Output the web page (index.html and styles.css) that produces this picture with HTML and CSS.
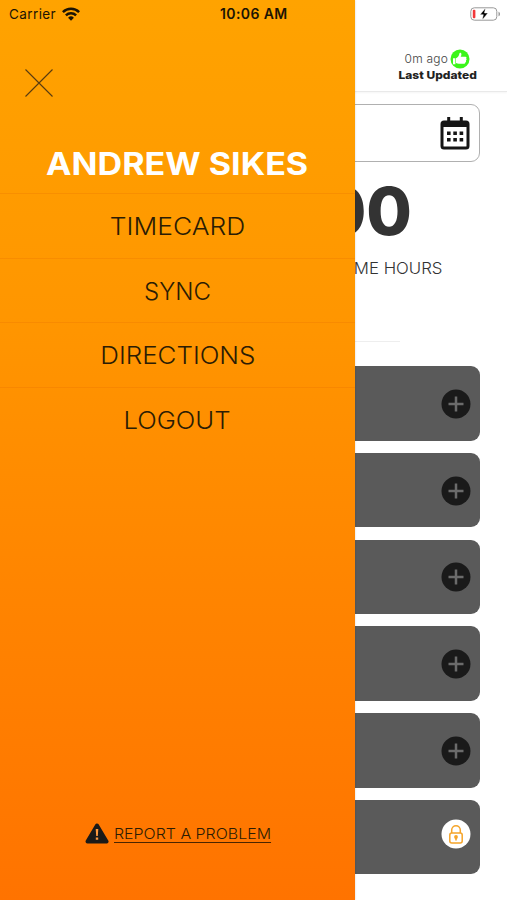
FILE: index.html
```
<!DOCTYPE html>
<html lang="en">
<head>
<meta charset="utf-8">
<title>Timecard</title>
<link rel="stylesheet" href="styles.css">
</head>
<body>
<div class="phone">
  <main class="page">
    <header class="topbar">
      <div class="status">
        <div class="ago"><span class="t ago-text">0m ago</span>
          <svg width="20" height="20" viewBox="0 0 20 20"><circle cx="10" cy="10" r="9.5" fill="#3bf51a"/><path d="M3 9.300h2.400v6H3zM6 9.200c1.900-.8 2.900-2.400 3.400-4.800.2-1 1.900-.8 2 .6.100 1-.3 2-.7 2.700h4.700c1.200 0 1.500 1.200.7 1.800.8.500.6 1.600-.2 1.900.5.600.2 1.400-.5 1.700.3.800-.2 1.600-1.200 1.600H8.800c-1 0-1.900-.3-2.800-.7z" fill="#fff"/></svg>
        </div>
        <div class="t updated">Last Updated</div>
      </div>
    </header>
    <section class="datebox">
      <svg width="30" height="34" viewBox="0 0 30 34"><path d="M8.700 1v6M21.300 1v6" stroke="#151515" stroke-width="3"/><rect x="2" y="6" width="26" height="26" rx="2" fill="#fff" stroke="#151515" stroke-width="3"/><path d="M2 5h26v6H2z" fill="#151515"/><path d="M7 15.500h3.600v3.600H7zM13.300 15.500h3.600v3.600h-3.600zM19.600 15.500h3.600v3.600h-3.600zM7 22h3.600v3.600H7zM13.300 22h3.600v3.600h-3.600zM19.600 22h3.600v3.600h-3.600z" fill="#151515"/></svg>
    </section>
    <div class="total"><span class="t">00</span></div>
    <div class="label"><span class="t">ME HOURS</span></div>
    <hr class="rule">
    <section class="cards">
      <div class="card"><svg class="dot" viewBox="0 0 30 30"><circle cx="15" cy="15" r="14.500" fill="#1a1a1a"/><path d="M15 7.500v15M7.500 15h15" stroke="#6b6b6b" stroke-width="2.500"/></svg></div>
      <div class="card"><svg class="dot" viewBox="0 0 30 30"><circle cx="15" cy="15" r="14.500" fill="#1a1a1a"/><path d="M15 7.500v15M7.500 15h15" stroke="#6b6b6b" stroke-width="2.500"/></svg></div>
      <div class="card"><svg class="dot" viewBox="0 0 30 30"><circle cx="15" cy="15" r="14.500" fill="#1a1a1a"/><path d="M15 7.500v15M7.500 15h15" stroke="#6b6b6b" stroke-width="2.500"/></svg></div>
      <div class="card"><svg class="dot" viewBox="0 0 30 30"><circle cx="15" cy="15" r="14.500" fill="#1a1a1a"/><path d="M15 7.500v15M7.500 15h15" stroke="#6b6b6b" stroke-width="2.500"/></svg></div>
      <div class="card"><svg class="dot" viewBox="0 0 30 30"><circle cx="15" cy="15" r="14.500" fill="#1a1a1a"/><path d="M15 7.500v15M7.500 15h15" stroke="#6b6b6b" stroke-width="2.500"/></svg></div>
      <div class="card"><svg class="dot lock" viewBox="0 0 30 30"><circle cx="15" cy="15" r="14.500" fill="#fff"/><g fill="none" stroke="#f5a429" stroke-width="1.500"><rect x="8.800" y="14" width="12.400" height="10" rx="2"/><path d="M10.700 14v-3a4.300 4.300 0 0 1 8.600 0v3"/></g><circle cx="15" cy="18" r="1.900" fill="#f5a429"/><path d="M14.200 18h1.600v3.400h-1.600z" fill="#f5a429"/></svg></div>
    </section>
  </main>

  <nav class="drawer">
    <svg class="close" width="28" height="28" viewBox="0 0 28 28"><path d="M.5.500l27 27M27.500.500l-27 27" stroke="#5a3c10" stroke-width="1.100"/></svg>
    <div class="name"><span class="t">ANDREW SIKES</span></div>
    <div class="item timecard"><span class="t">TIMECARD</span></div>
    <div class="item sync"><span class="t">SYNC</span></div>
    <div class="item directions"><span class="t">DIRECTIONS</span></div>
    <div class="item logout"><span class="t">LOGOUT</span></div>
    <div class="report">
      <svg width="24" height="21" viewBox="0 0 24 21"><path d="M12 2.500L21.500 18.500h-19z" fill="#1b1a18" stroke="#1b1a18" stroke-width="4" stroke-linejoin="round"/><path d="M10.700 6h2.600l-.5 7h-1.600zM10.800 14.500h2.400v2.300h-2.400z" fill="#ff9a40"/></svg>
      <span class="t report-text">REPORT A PROBLEM</span>
    </div>
  </nav>

  <div class="sysbar">
    <span class="carrier">Carrier</span>
    <svg class="wifi" width="18" height="14" viewBox="0 0 18 14"><g fill="none" stroke="#1c1404" stroke-width="2.500"><path d="M.9 5.100a11.500 11.500 0 0 1 16.200 0"/><path d="M3.900 8.300a7.300 7.300 0 0 1 10.200 0"/></g><path d="M9 13.800l-2.900-3.100a4.200 4.200 0 0 1 5.800 0z" fill="#1c1404"/></svg>
    <span class="clock">10:06 AM</span>
    <svg class="battery" width="31" height="14" viewBox="0 0 31 14"><rect x=".8" y=".8" width="26" height="12.400" rx="3.500" fill="#fff" stroke="#999" stroke-width="1"/><path d="M28.500 4.700c2 .6 2 4 0 4.600z" fill="#999"/><rect x="2.800" y="2.700" width="2.600" height="8.600" rx="1" fill="#f2383b"/><path d="M15.500 1L10 7.700h3.300L12.200 13l5.800-7h-3.500z" fill="#000" stroke="#fff" stroke-width=".5"/></svg>
  </div>
</div>
</body>
</html>
```
FILE: styles.css
```
* { box-sizing: border-box; }
body { margin: 0; font-family: Inter, sans-serif; background: #fff; }
svg { display: block; flex: none; }
.phone { position: relative; width: 507px; height: 900px; overflow: hidden; }
.t { display: inline-block; white-space: nowrap; }

.page { display: flex; flex-direction: column; height: 900px; }
.topbar { height: 92px; border-bottom: 1px solid #e9e9e9; box-shadow: 0 1px 2px #f5f5f5; display: flex; justify-content: flex-end; padding: 49px 30px 0 0; }
.status { display: flex; flex-direction: column; align-items: flex-end; }
.ago { display: flex; align-items: center; height: 20px; gap: 2px; padding-right: 7px; }
.ago-text { font-size: 12px; font-weight: 300; color: #444; letter-spacing: .2px; line-height: 18px; }
.updated { font-size: 11px; font-weight: 800; line-height: 13px; color: #222; transform: scaleX(1.09); transform-origin: right; }
.datebox { height: 58px; margin: 12px 27px 0; border: 1px solid #b0b0b0; border-radius: 9px; display: flex; justify-content: flex-end; align-items: center; padding-right: 9px; }
.total { height: 80px; margin-top: 9px; padding-right: 95px; text-align: right; font-size: 66px; line-height: 80px; font-weight: 800; color: #333; }
.label { height: 20px; margin-top: 7px; padding-right: 65px; text-align: right; font-size: 16px; line-height: 20px; font-weight: 300; color: #333; }
.label .t { transform: scaleX(1.05); transform-origin: right; }
.rule { width: 294px; height: 1px; border: 0; margin: 63px 0 0 106px; background: #eee; }
.cards { margin: 24.300px 27px 0; display: flex; flex-direction: column; gap: 12.200px; }
.card { height: 74.500px; border-radius: 9px; background: #5a5a5a; display: flex; align-items: center; justify-content: flex-end; padding-right: 9px; }
.dot { width: 30px; height: 30px; margin-top: 1px; }
.lock { margin-top: -6px; }

.drawer { position: absolute; left: 0; top: 0; width: 355px; height: 900px; background: linear-gradient(#ffa300, #ff9600 35%, #ff8500 65%, #ff7300); box-shadow: 0 0 2px rgba(0,0,0,.18); display: flex; flex-direction: column; color: #2b1c04; padding-top: 69px; }
.close { margin-left: 25px; }
.name { height: 96px; padding-top: 48px; text-align: center; font-size: 31px; line-height: 38px; font-weight: 700; color: #fff; }
.name .t { transform: scaleX(1.1); }
.item { height: 64.700px; border-top: 1px solid rgba(225,105,0,.24); text-align: center; font-size: 24px; line-height: 65px; font-weight: 300; }
.timecard .t { transform: scaleX(1.1); }
.directions .t { transform: scaleX(1.08); }
.logout .t { transform: scaleX(1.07); }
.report { margin-top: auto; margin-bottom: 56px; height: 21px; padding-left: 85px; display: flex; align-items: center; gap: 5px; }
.report-text { font-size: 14px; font-weight: 300; line-height: 16px; margin-top: 2px; border-bottom: 1px solid #4a2500; transform: scaleX(1.138); transform-origin: left; }

.sysbar { position: absolute; left: 0; top: 0; width: 507px; height: 27px; display: flex; align-items: center; padding: 0 6px 0 9px; color: #1c1404; }
.carrier { width: 53px; font-size: 13.500px; letter-spacing: .4px; white-space: nowrap; }
.clock { margin-left: 140px; font-size: 14px; font-weight: 600; letter-spacing: .4px; white-space: nowrap; }
.battery { margin-left: auto; }
```
